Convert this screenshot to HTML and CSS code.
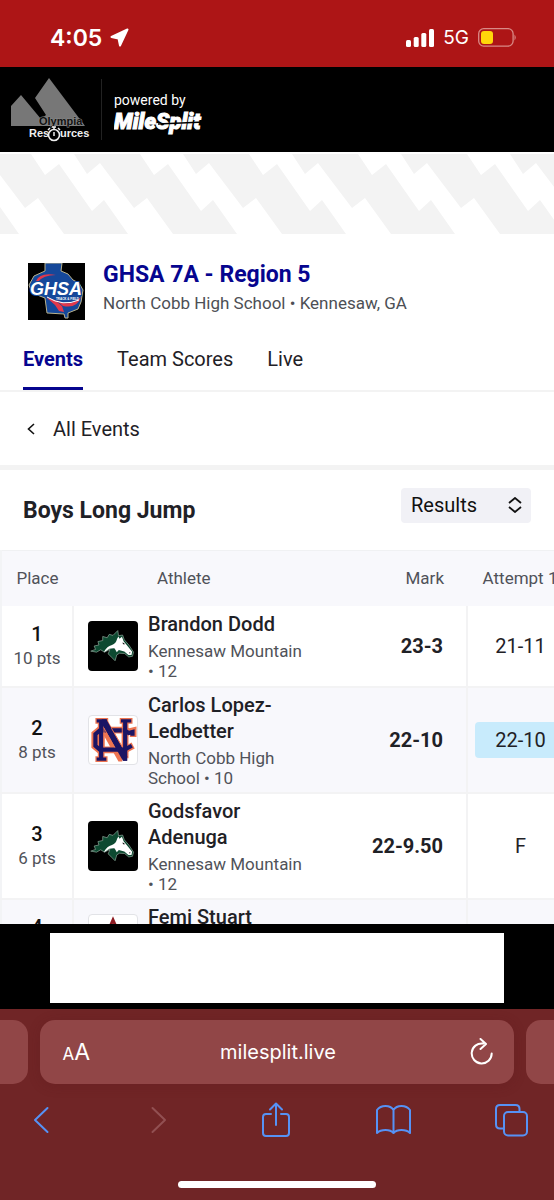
FILE: index.html
```html
<!DOCTYPE html>
<html lang="en">
<head>
<meta charset="utf-8">
<meta name="viewport" content="width=device-width, initial-scale=1">
<title>GHSA 7A - Region 5</title>
<link rel="stylesheet" href="styles.css">
</head>
<body>
<svg class="defs" aria-hidden="true">
  <symbol id="mustang" viewBox="0 0 146 146">
    <rect width="146" height="146" fill="#000"/>
    <path d="M8 88L22 83L18 73L32 70L29 60L43 57L43 45L56 49L62 39L73 42L87 28L89 43L101 41L106 55L120 71L133 91L130 103L119 105L107 95L92 94L84 99L79 116L69 106L59 96L64 83L48 91L37 84L25 91Z" fill="#0d4a31" stroke="#8fa89b" stroke-width="2"/>
    <path d="M46 92Q54 74 70 70Q82 66 85 52L89 45L92 52L99 46L104 59L116 74L129 90L127 99L118 99L106 89L90 85L84 91L78 80Q62 79 54 87Z" fill="#fff"/>
    <path d="M101 62L109 68L102 68Z M120 91L125 93L121 95Z" fill="#111"/>
    <path d="M70 90L82 94L79 108Z" fill="#0d4a31"/>
  </symbol>
</svg>
<div class="screen">
  <div class="status">
    <div class="status-group">
      <span class="clock">4:05</span>
      <svg width="19" height="19" viewBox="0 0 19 19"><path d="M17.500 1.500L10 17.500L8.500 10.500L1.500 9Z" fill="#fff" stroke="#fff" stroke-width="2" stroke-linejoin="round"/></svg>
    </div>
    <div class="status-group status-right">
      <svg width="28" height="18" viewBox="0 0 28 18" fill="#fff"><rect y="11" width="5" height="7" rx="1.5"/><rect x="7.7" y="8" width="5" height="10" rx="1.5"/><rect x="15.3" y="4" width="5" height="14" rx="1.5"/><rect x="23" width="5" height="18" rx="1.5"/></svg>
      <span class="network">5G</span>
      <svg width="39" height="19" viewBox="0 0 39 19"><rect x=".7" y=".7" width="34.4" height="17.4" rx="5" fill="none" stroke="#d98a86" stroke-width="1.3"/><rect x="3" y="3" width="12" height="13" rx="3" fill="#ffd60a"/><path d="M36.5 6.5Q39 9.4 36.5 12.4Z" fill="#d98a86"/></svg>
    </div>
  </div>

  <header class="brand">
    <svg class="olympia" width="80" height="66" viewBox="0 0 80 66" role="img" aria-label="Olympia Resources">
      <path d="M0 49V29L10 18L30 42L35 38L24 21L38 1L74 49Z" fill="#777"/>
      <text x="28" y="48" class="olympia-top">Olympia</text>
      <text x="18" y="60" class="olympia-word">Res</text>
      <text x="49" y="60" class="olympia-word">urces</text>
      <circle cx="43" cy="58" r="5.5" fill="#000" stroke="#eee" stroke-width="1.6"/>
      <path d="M43 55V59M41 50H45M43 50V52M37 53L39 51M49 53L47 51" stroke="#eee" stroke-width="1.5"/>
    </svg>
    <div class="powered">
      <span>powered by</span>
      <svg width="100" height="27" viewBox="0 0 100 27"><text x="0" y="19" class="milesplit">MileSplit</text><path d="M44 14L90 12" stroke="#000" stroke-width="1.400"/></svg>
    </div>
  </header>

  <svg class="banner" aria-hidden="true">
    <defs><pattern id="bolts" width="109" height="83" patternUnits="userSpaceOnUse">
      <g fill="#f3f3f3">
        <path id="bolt" d="M74 2H140L154 23L168 12L201 59L213 48L237 82H173L147 46L134 56L100 11L87 22Z"/>
        <use href="#bolt" x="-109"/><use href="#bolt" x="-218"/>
      </g>
    </pattern></defs>
    <rect width="100%" height="83" fill="url(#bolts)"/>
  </svg>

  <main class="page">
    <section class="meet">
      <svg width="57" height="57" viewBox="0 0 57 57" role="img" aria-label="GHSA Track and Field">
        <rect width="57" height="57" fill="#000"/>
        <path d="M17 0H34L33 8L40 11L45 17L51 20L55 27L53 39L50 46L40 50V55H37L36 51L19 50L17 35L4 30L1 22L6 13L17 8Z" fill="#15489a" stroke="#b9b28c" stroke-width="1"/>
        <path d="M8 18Q12 9 28 12Q15 12 10 19Z" fill="#e2384c"/>
        <path d="M19 35L27 37L34 43L36 49L31 48L27 42Z" fill="#e2384c"/>
        <path d="M28 37Q42 45 53 34Q49 46 35 43Z" fill="#e2384c"/>
        <path d="M19 34Q35 44 51 37" fill="none" stroke="#fff" stroke-width="1"/>
        <text x="2" y="32" class="ghsa-mark">GHSA</text>
        <text x="28" y="37" class="ghsa-sub">TRACK &amp; FIELD</text>
      </svg>
      <div class="meet-text">
        <h1>GHSA 7A - Region 5</h1>
        <p>North Cobb High School • Kennesaw, GA</p>
      </div>
    </section>

    <nav class="tabs">
      <a class="active" href="#events">Events</a>
      <a href="#scores">Team Scores</a>
      <a href="#live">Live</a>
    </nav>

    <a class="back" href="#all">
      <svg width="8" height="12" viewBox="0 0 8 12"><path d="M7 1L1.5 6L7 11" fill="none" stroke="#111" stroke-width="1.6"/></svg>
      All Events
    </a>

    <section class="event">
      <h2>Boys Long Jump</h2>
      <div class="picker">
        <select aria-label="View"><option>Results</option></select>
        <svg width="14" height="16" viewBox="0 0 14 16"><path d="M1 6L7 1L13 6M1 10L7 15L13 10" fill="none" stroke="#111" stroke-width="1.8"/></svg>
      </div>
    </section>

    <table class="results">
      <colgroup><col class="col-place"><col><col class="col-mark"><col class="col-try"></colgroup>
      <thead>
        <tr><th>Place</th><th class="head-athlete">Athlete</th><th class="head-mark">Mark</th><th>Attempt 1</th></tr>
      </thead>
      <tbody>
        <tr>
          <td class="place"><b>1</b><span>10 pts</span></td>
          <td><div class="athlete"><svg class="logo"><use href="#mustang"/></svg><div><b>Brandon Dodd</b><span>Kennesaw Mountain • 12</span></div></div></td>
          <td class="mark">23-3</td>
          <td class="try"><span>21-11</span></td>
        </tr>
        <tr>
          <td class="place"><b>2</b><span>8 pts</span></td>
          <td><div class="athlete">
            <svg class="logo light" viewBox="0 0 150 150">
              <g fill="none">
                <g stroke="#ee7551" stroke-width="21">
                  <path d="M138 66V46L124 49L112 44H32L18 56V94L32 106H112L138 92"/>
                  <path d="M38 18V132M113 18V132"/>
                </g>
                <path d="M20 15H60M96 15H136M20 135H58" stroke="#ee7551" stroke-width="18"/>
                <path d="M26 6H54L104 96V142H92L38 46Z" fill="#ee7551"/>
                <g stroke="#1b1464" stroke-width="13">
                  <path d="M136 62V50L124 53L111 45H34L20 57V93L34 105H111L134 93"/>
                  <path d="M38 16V132M113 16V140"/>
                </g>
                <path d="M24 15H56M100 15H132M24 135H54" stroke="#1b1464" stroke-width="10"/>
                <path d="M40 10H54L119 126V140H106L40 24Z" fill="#1b1464"/>
                <path d="M47 38V98M104 34V96M47 38L80 98M70 38L104 96" stroke="#ee7551" stroke-width="3"/>
              </g>
            </svg>
            <div><b>Carlos Lopez-Ledbetter</b><span>North Cobb High School • 10</span></div></div></td>
          <td class="mark">22-10</td>
          <td class="try"><span class="best">22-10</span></td>
        </tr>
        <tr>
          <td class="place"><b>3</b><span>6 pts</span></td>
          <td><div class="athlete"><svg class="logo"><use href="#mustang"/></svg><div><b>Godsfavor Adenuga</b><span>Kennesaw Mountain • 12</span></div></div></td>
          <td class="mark">22-9.50</td>
          <td class="try"><span>F</span></td>
        </tr>
        <tr>
          <td class="place"><b>4</b><span>5 pts</span></td>
          <td><div class="athlete">
            <svg class="logo light" viewBox="0 0 50 50"><path d="M25 5L41 42H9Z" fill="#fff" stroke="#8d1b22" stroke-width="3"/><path d="M25 9L31 24H19Z" fill="#222"/></svg>
            <div><b>Femi Stuart</b><span>North Paulding High School • 12</span></div></div></td>
          <td class="mark">22-7</td>
          <td class="try"><span>21-8</span></td>
        </tr>
      </tbody>
    </table>
  </main>

  <aside class="ad"><div class="ad-slot"></div></aside>

  <footer class="browser">
    <div class="tabstrip">
      <div class="peek peek-left"></div>
      <div class="address">
        <button class="text-size" aria-label="Text size"><small>A</small>A</button>
        <input type="text" value="milesplit.live" aria-label="Address">
        <button aria-label="Reload"><svg width="24" height="28" viewBox="0 0 24 28"><path d="M13 5.5A10 10 0 1 0 21.7 15.5M10.5 1L16 6L10.5 11" fill="none" stroke="#fff" stroke-width="2" stroke-linecap="round" stroke-linejoin="round"/></svg></button>
      </div>
      <div class="peek peek-right"></div>
    </div>
    <div class="tools">
      <button aria-label="Back"><svg width="16" height="28" viewBox="0 0 16 28"><path d="M14.500 2L2 14L14.500 26"/></svg></button>
      <button class="off" aria-label="Forward"><svg width="16" height="28" viewBox="0 0 16 28"><path d="M1.500 2L14 14L1.500 26"/></svg></button>
      <button aria-label="Share"><svg width="28" height="36" viewBox="0 0 28 36"><path d="M9 12H4Q1 12 1 15V31Q1 34 4 34H24Q27 34 27 31V15Q27 12 24 12H19M14 23V2M8 7.500L14 1.500L20 7.500"/></svg></button>
      <button aria-label="Bookmarks"><svg width="35" height="30" viewBox="0 0 35 30"><path d="M17.500 5Q15 1 9.500 1Q4 1 1 5V28Q4 25 9.500 25Q15 25 17.500 28Q20 25 25.500 25Q31 25 34 28V5Q31 1 25.500 1Q20 1 17.500 5ZM17.500 5V28"/></svg></button>
      <button aria-label="Tabs"><svg width="33" height="33" viewBox="0 0 33 33"><path d="M9 24.500H5Q1 24.500 1 20.500V5Q1 1 5 1H20.500Q24.500 1 24.500 5V8"/><rect x="9" y="8" width="23" height="23.500" rx="4"/></svg></button>
    </div>
    <div class="home"></div>
  </footer>
</div>
</body>
</html>
```

FILE: styles.css
```css
* { box-sizing: border-box; }
body { margin: 0; font-family: Roboto, "Liberation Sans", sans-serif; color: #1f2126; background: #fff; }
h1, h2, p { margin: 0; }
a { color: inherit; text-decoration: none; }
button { border: 0; padding: 0; background: none; color: inherit; font: inherit; }
svg { display: block; flex: none; }
.defs { position: absolute; width: 0; height: 0; }

.screen { display: flex; flex-direction: column; height: 100vh; overflow: hidden; }
.status, .brand, .banner, .ad, .browser { flex: none; }

.status { display: flex; justify-content: space-between; align-items: center; height: 67px; padding: 8px 37px 0 50px; background: #ad1516; color: #fff; font-family: Inter, sans-serif; }
.status-group { display: flex; align-items: center; gap: 8px; }
.status-right { gap: 9px; }
.clock { font-size: 23px; font-weight: 600; }
.network { font-size: 19px; }

.brand { display: flex; align-items: center; height: 85px; padding-left: 11px; gap: 10px; background: #000; color: #fff; }
.olympia-top { font: bold 11px "Liberation Sans", sans-serif; fill: #111; stroke: #888; stroke-width: 1px; paint-order: stroke; }
.olympia-word { font: bold 11px "Liberation Sans", sans-serif; fill: #eee; }
.powered { display: flex; flex-direction: column; gap: 1px; padding: 13px 0 0 12px; height: 61px; border-left: 1px solid #222; font-size: 14px; line-height: 17px; }
.milesplit { font: italic 900 22px Roboto, sans-serif; fill: #fff; stroke: #fff; stroke-width: 1px; }

.banner { width: 100%; height: 83px; }

.page { flex: 1; min-height: 0; overflow: hidden; }
.meet { display: flex; align-items: center; gap: 18px; padding: 25px 28px 7px; }
.meet-text { padding-bottom: 7px; }
.meet h1 { font-size: 23px; line-height: 30px; font-weight: 700; color: #06058f; }
.meet p { font-size: 17px; line-height: 26px; color: #4d4f55; }
.ghsa-mark { font: italic bold 18px "Liberation Sans", sans-serif; fill: #fff; stroke: #15489a; stroke-width: 2px; paint-order: stroke; }
.ghsa-sub { font: bold 3px "Liberation Sans", sans-serif; fill: #fff; }

.tabs { display: flex; gap: 34px; padding: 0 23px; border-bottom: 2px solid #f3f3f3; font-size: 20px; line-height: 24px; }
.tabs a { padding: 17px 0 16px; border-bottom: 3px solid transparent; }
.tabs .active { border-color: #06058f; color: #06058f; font-weight: 700; }
.back { display: flex; align-items: center; gap: 18px; height: 78px; padding: 0 27px; border-bottom: 5px solid #f3f3f3; font-size: 20px; }

.event { display: flex; align-items: center; justify-content: space-between; height: 80px; padding: 0 23px; }
.event h2 { font-size: 23px; font-weight: 700; }
.picker { position: relative; display: flex; align-items: center; width: 130px; height: 35px; margin-bottom: 10px; border-radius: 4px; background: #f1f1f6; }
.picker select { appearance: none; width: 100%; height: 100%; padding: 0 10px; border: 0; background: none; color: #111; font: 20px Roboto, sans-serif; }
.picker svg { position: absolute; right: 9px; pointer-events: none; }

.results { width: 100%; min-width: 573px; table-layout: fixed; border-collapse: collapse; border-left: 2px solid #f3f4f6; }
.col-place { width: 72px; }
.col-mark { width: 150px; }
.col-try { width: 106px; }
.results th { height: 55px; padding: 0; border-top: 1px solid #f0f1f3; background: #f8f8fc; color: #505259; font-size: 17px; font-weight: 400; white-space: nowrap; }
.results .head-athlete { padding-left: 84px; text-align: left; }
.results .head-mark { padding-right: 23px; text-align: right; }
.results td { height: 81px; padding: 0; border-bottom: 2px solid #f3f3f4; }
.results tbody tr:nth-child(even) { background: #f8f8fc; }
.place { border-right: 2px solid #f3f3f4; text-align: center; line-height: 24px; }
.place b, .place span { display: block; }
.place b { font-size: 20px; font-weight: 500; color: #111; }
.place span { font-size: 17px; color: #505259; }
.athlete { display: flex; align-items: center; gap: 10px; padding: 4px 0 4px 14px; }
.athlete > div { width: 158px; }
.athlete b { display: block; margin-bottom: 4px; font-size: 20px; line-height: 26px; font-weight: 500; }
.athlete span { display: block; font-size: 17px; line-height: 20px; color: #505259; }
.logo { width: 50px; height: 50px; border-radius: 4px; }
.light { border: 1px solid #e2e3e7; background: #fff; }
.mark { text-align: right; font-size: 20px; font-weight: 700; }
.results .mark { padding-right: 23px; }
.try { border-left: 2px solid #f3f3f4; text-align: center; font-size: 20px; }
.results .try { padding: 0 7px; }
.try span { display: block; line-height: 36px; border-radius: 4px; }
.try .best { background: #c8ebfc; }

.ad { height: 85px; padding: 9px 50px 6px; background: #000; }
.ad-slot { height: 100%; background: #fff; }

.browser { display: flex; flex-direction: column; align-items: center; height: 191px; padding-top: 11px; background: #702526; font-family: Inter, sans-serif; }
.tabstrip { display: flex; align-self: stretch; gap: 12px; height: 64px; color: #fff; }
.peek { width: 28px; background: #914647; }
.peek-left { border-radius: 0 15px 15px 0; }
.peek-right { border-radius: 15px 0 0 15px; }
.address { flex: 1; min-width: 0; display: flex; align-items: center; justify-content: space-between; padding: 0 20px 0 22px; border-radius: 15px; background: #914647; box-shadow: 0 2px 12px #5f1c1e55; }
.address button { display: flex; align-items: baseline; justify-content: flex-end; width: 28px; }
.address input { flex: 1; min-width: 0; border: 0; padding: 0; background: none; color: #fff; text-align: center; font: 20px Inter, sans-serif; }
.text-size { font-size: 24px; }
.address .text-size { font-size: 23px; }
.text-size small { font-size: 17px; }
.tools { display: flex; align-self: stretch; align-items: center; justify-content: space-between; height: 72px; padding: 0 25px 0 23px; }
.tools button { display: flex; justify-content: center; width: 36px; }
.tools svg { fill: none; stroke: #5692f5; stroke-width: 2; stroke-linecap: round; stroke-linejoin: round; }
.tools .off svg { stroke: #925052; }
.home { width: 198px; height: 7px; margin-top: 25px; border-radius: 4px; background: #fff; }
```
